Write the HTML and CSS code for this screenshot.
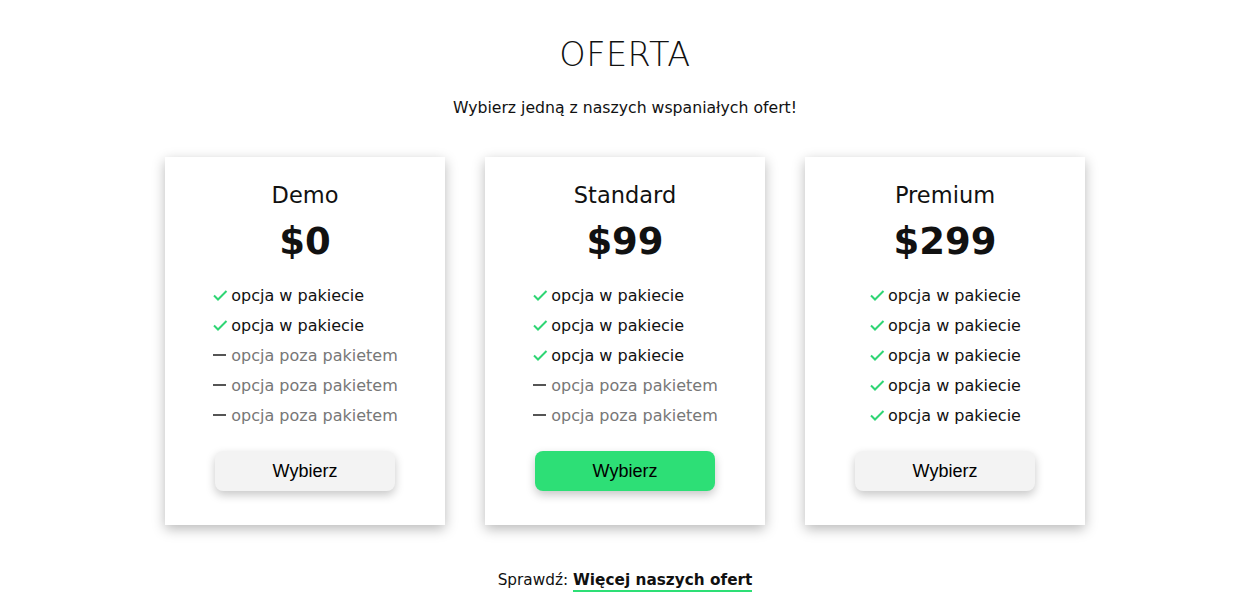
FILE: index.html
```html
<!DOCTYPE html>
<html lang="pl">
<head>
<meta charset="utf-8">
<title>Oferta</title>
<link rel="stylesheet" href="styles.css">
</head>
<body>
<main class="page">
  <h1 class="title">OFERTA</h1>
  <p class="subtitle">Wybierz jedną z naszych wspaniałych ofert!</p>
  <section class="cards">
    <article class="card">
      <h2 class="card-name">Demo</h2>
      <div class="price">$0</div>
      <ul class="features">
        <li class="yes"><svg class="ico" viewBox="0 0 16 16"><path d="M2 8.5l4 4L14.5 4"/></svg>opcja w pakiecie</li>
        <li class="yes"><svg class="ico" viewBox="0 0 16 16"><path d="M2 8.5l4 4L14.5 4"/></svg>opcja w pakiecie</li>
        <li class="no"><span class="dash"></span>opcja poza pakietem</li>
        <li class="no"><span class="dash"></span>opcja poza pakietem</li>
        <li class="no"><span class="dash"></span>opcja poza pakietem</li>
      </ul>
      <button class="btn">Wybierz</button>
    </article>
    <article class="card">
      <h2 class="card-name">Standard</h2>
      <div class="price">$99</div>
      <ul class="features">
        <li class="yes"><svg class="ico" viewBox="0 0 16 16"><path d="M2 8.5l4 4L14.5 4"/></svg>opcja w pakiecie</li>
        <li class="yes"><svg class="ico" viewBox="0 0 16 16"><path d="M2 8.5l4 4L14.5 4"/></svg>opcja w pakiecie</li>
        <li class="yes"><svg class="ico" viewBox="0 0 16 16"><path d="M2 8.5l4 4L14.5 4"/></svg>opcja w pakiecie</li>
        <li class="no"><span class="dash"></span>opcja poza pakietem</li>
        <li class="no"><span class="dash"></span>opcja poza pakietem</li>
      </ul>
      <button class="btn btn-primary">Wybierz</button>
    </article>
    <article class="card">
      <h2 class="card-name">Premium</h2>
      <div class="price">$299</div>
      <ul class="features">
        <li class="yes"><svg class="ico" viewBox="0 0 16 16"><path d="M2 8.5l4 4L14.5 4"/></svg>opcja w pakiecie</li>
        <li class="yes"><svg class="ico" viewBox="0 0 16 16"><path d="M2 8.5l4 4L14.5 4"/></svg>opcja w pakiecie</li>
        <li class="yes"><svg class="ico" viewBox="0 0 16 16"><path d="M2 8.5l4 4L14.5 4"/></svg>opcja w pakiecie</li>
        <li class="yes"><svg class="ico" viewBox="0 0 16 16"><path d="M2 8.5l4 4L14.5 4"/></svg>opcja w pakiecie</li>
        <li class="yes"><svg class="ico" viewBox="0 0 16 16"><path d="M2 8.5l4 4L14.5 4"/></svg>opcja w pakiecie</li>
      </ul>
      <button class="btn">Wybierz</button>
    </article>
  </section>
  <p class="more">Sprawdź: <a class="more-link" href="#">Więcej naszych ofert</a></p>
</main>
</body>
</html>
```

FILE: styles.css
```css
* { box-sizing: border-box; }
html, body { margin: 0; padding: 0; background: #fff; }
body {
  font-family: "DejaVu Sans", "Open Sans", sans-serif;
  color: #111;
}
.page {
  display: flex;
  flex-direction: column;
  align-items: center;
  padding: 35px 0 0 2px;
}
.title {
  margin: 0;
  font-size: 33.5px;
  line-height: 40px;
  font-weight: 300;
  letter-spacing: 0.5px;
}
.subtitle {
  margin: 21px 0 0;
  font-size: 15.7px;
  line-height: 24px;
}
.cards {
  display: flex;
  gap: 40px;
  margin-top: 37px;
}
.card {
  width: 280px;
  background: #fff;
  box-shadow: 0 4px 12px rgba(0,0,0,0.28);
  display: flex;
  flex-direction: column;
  align-items: center;
  padding: 24px 0 34px;
}
.card-name {
  margin: 0;
  font-size: 22.5px;
  line-height: 28px;
  font-weight: 400;
}
.price {
  margin-top: 9px;
  font-size: 37px;
  line-height: 48px;
  font-weight: 700;
}
.features {
  list-style: none;
  margin: 14px 0 0;
  padding: 0;
}
.features li {
  display: flex;
  align-items: center;
  height: 30px;
  font-size: 16px;
}
.features li.no { color: #777; }
.ico {
  width: 16px;
  height: 16px;
  margin-right: 3px;
  fill: none;
  stroke: #2fd574;
  stroke-width: 2;
}
.dash {
  display: inline-block;
  width: 13px;
  height: 2px;
  background: #555;
  margin: 0 5px 0 1px;
}
.btn {
  margin-top: 21px;
  width: 180px;
  height: 40px;
  border: none;
  border-radius: 8px;
  background: #f3f3f3;
  box-shadow: 0 4px 10px rgba(0,0,0,0.22);
  font-family: "Liberation Sans", Arial, sans-serif;
  font-size: 18px;
  color: #000;
  cursor: pointer;
}
.btn-primary { background: #2ddf76; }
.more {
  margin: 43px 0 0;
  font-size: 15.3px;
  line-height: 24px;
}
.more-link {
  color: #111;
  font-weight: 700;
  text-decoration: none;
  border-bottom: 2px solid #2ddf76;
  padding-bottom: 1px;
}
```
